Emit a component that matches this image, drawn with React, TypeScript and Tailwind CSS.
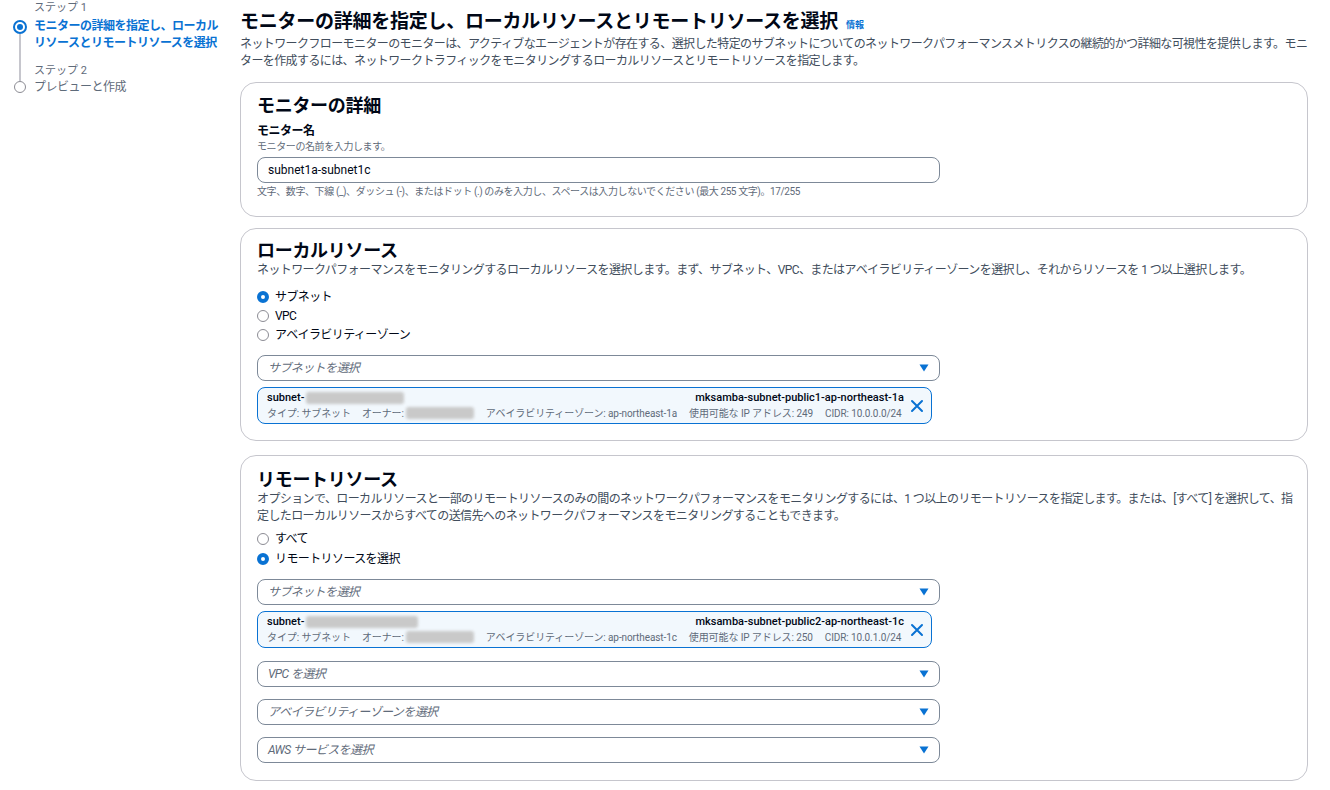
import React from "react";

const FONT = "font-['Roboto','Noto_Sans_CJK_JP',sans-serif]";

function Radio({ checked, label }: { checked?: boolean; label: string }) {
  return (
    <label className="flex h-[19px] items-center gap-[6px] text-[12px] tracking-[-0.6px] text-[#000716]">
      <span
        className={
          checked
            ? "h-[12px] w-[12px] rounded-full border-[4px] border-[#0972d3] bg-white"
            : "h-[12px] w-[12px] rounded-full border border-[#8c8c94] bg-white"
        }
      />
      {label}
    </label>
  );
}

function Select({ placeholder }: { placeholder: string }) {
  return (
    <div className="flex h-[26px] w-[683px] items-center justify-between rounded-[8px] border border-[#7d8998] bg-white pl-[10px] pr-[10px]">
      <span className="text-[12px] italic tracking-[-0.6px] text-[#5f6b7a]">{placeholder}</span>
      <svg width="10" height="8" viewBox="0 0 10 8">
        <path d="M0.5 0.5h9L5 7.5z" fill="#0972d3" />
      </svg>
    </div>
  );
}

function Blur({ w }: { w: number }) {
  return <span className="ml-[2px] inline-block h-[12px] rounded-[3px] bg-[#c9c9c9] blur-[1.5px]" style={{ width: w }} />;
}

function Token({
  name,
  az,
  ips,
  cidr,
  idBlur,
}: {
  name: string;
  az: string;
  ips: string;
  cidr: string;
  idBlur: number;
}) {
  return (
    <div className="flex h-[37px] w-[675px] items-center rounded-[8px] border border-[#0972d3] bg-[#f2f8fd] pl-[9px] pr-[7px]">
      <div className="flex flex-1 flex-col">
        <div className="flex h-[15px] items-center justify-between text-[11px] font-medium text-[#000716]">
          <span className="flex items-center">
            subnet-
            <Blur w={idBlur} />
          </span>
          <span>{name}</span>
        </div>
        <div className="flex h-[15px] items-center gap-[12px] text-[10px] tracking-[-0.1px] text-[#5f6b7a]">
          <span className="flex items-center">
            タイプ: サブネット
            <span className="ml-[11px]">オーナー:</span>
            <Blur w={68} />
          </span>
          <span>アベイラビリティーゾーン: {az}</span>
          <span>使用可能な IP アドレス: {ips}</span>
          <span>CIDR: {cidr}</span>
        </div>
      </div>
      <svg width="14" height="14" viewBox="0 0 14 14" className="ml-[6px]">
        <path d="M2 2l10 10M12 2L2 12" stroke="#0972d3" strokeWidth="2" strokeLinecap="round" />
      </svg>
    </div>
  );
}

function Card({ children, className = "" }: { children: React.ReactNode; className?: string }) {
  return (
    <section className={"w-[1068px] rounded-[16px] border border-[#c6c6cd] bg-white pl-[16px] pr-[12px] " + className}>
      {children}
    </section>
  );
}

function Steps() {
  return (
    <nav className="w-[228px] pl-[13px] pt-[1px]">
      <div className="flex">
        <div className="flex w-[14px] flex-col items-center">
          <div className="h-[19px]" />
          <span className="h-[14px] w-[14px] rounded-full border-[2px] border-[#0972d3] bg-white p-[2px]">
            <span className="block h-full w-full rounded-full bg-[#0972d3]" />
          </span>
          <div className="w-[2px] flex-1 bg-[#c6c6cd]" />
        </div>
        <div className="ml-[7px] pb-[12px]">
          <div className="h-[14px] text-[11px] leading-[14px] text-[#5f6b7a]">ステップ 1</div>
          <div className="mt-[3px] text-[12px] font-bold leading-[17px] tracking-[-0.5px] text-[#0972d3]">
            モニターの詳細を指定し、ローカル
            <br />
            リソースとリモートリソースを選択
          </div>
        </div>
      </div>
      <div className="flex">
        <div className="flex w-[14px] flex-col items-center">
          <div className="h-[17px] w-[2px] bg-[#c6c6cd]" />
          <span className="h-[12px] w-[12px] rounded-full border border-[#8c8c94] bg-white" />
        </div>
        <div className="ml-[7px]">
          <div className="h-[14px] text-[11px] leading-[14px] text-[#5f6b7a]">ステップ 2</div>
          <div className="mt-[1px] text-[12px] leading-[17px] tracking-[-0.5px] text-[#5f6b7a]">プレビューと作成</div>
        </div>
      </div>
    </nav>
  );
}

export default function App() {
  return (
    <div className={"flex min-h-[790px] w-[1330px] bg-white " + FONT}>
      <Steps />
      <main className="pt-[8px] pl-[12px]">
        <div className="flex items-baseline">
          <h1 className="text-[19px] font-bold leading-[28px] tracking-[-0.25px] text-[#000716]">
            モニターの詳細を指定し、ローカルリソースとリモートリソースを選択
          </h1>
          <a className="ml-[8px] text-[9px] font-bold text-[#0972d3]">情報</a>
        </div>
        <p className="w-[1068px] text-[12px] leading-[17px] tracking-[-0.6px] text-[#414d5c]">
          ネットワークフローモニターのモニターは、アクティブなエージェントが存在する、選択した特定のサブネットについてのネットワークパフォーマンスメトリクスの継続的かつ詳細な可視性を提供します。モニターを作成するには、ネットワークトラフィックをモニタリングするローカルリソースとリモートリソースを指定します。
        </p>

        <div className="mt-[12px] flex flex-col">
          <Card className="pt-[11px] pb-[16px]">
            <h2 className="text-[18px] font-bold leading-[24px] tracking-[-0.3px] text-[#000716]">モニターの詳細</h2>
            <div className="mt-[5px] text-[12px] font-bold leading-[16px] tracking-[-0.5px] text-[#000716]">モニター名</div>
            <div className="mt-[1px] text-[10px] leading-[14px] tracking-[-0.4px] text-[#5f6b7a]">モニターの名前を入力します。</div>
            <div className="mt-[3px] flex h-[26px] w-[683px] items-center rounded-[8px] border border-[#7d8998] px-[10px] text-[12px] text-[#000716]">
              subnet1a-subnet1c
            </div>
            <div className="mt-[1px] text-[10px] leading-[16px] tracking-[-0.4px] text-[#5f6b7a]">
              文字、数字、下線 (_)、ダッシュ (-)、またはドット (.) のみを入力し、スペースは入力しないでください (最大 255 文字)。17/255
            </div>
          </Card>

          <Card className="mt-[11px] pt-[11px] pb-[16px]">
            <h2 className="text-[18px] font-bold leading-[22px] tracking-[-0.3px] text-[#000716]">ローカルリソース</h2>
            <p className="text-[12px] leading-[17px] tracking-[-0.6px] text-[#414d5c]">
              ネットワークパフォーマンスをモニタリングするローカルリソースを選択します。まず、サブネット、VPC、またはアベイラビリティーゾーンを選択し、それからリソースを 1 つ以上選択します。
            </p>
            <div className="mt-[8px] flex flex-col">
              <Radio checked label="サブネット" />
              <Radio label="VPC" />
              <Radio label="アベイラビリティーゾーン" />
            </div>
            <div className="mt-[11px]">
              <Select placeholder="サブネットを選択" />
            </div>
            <div className="mt-[6px]">
              <Token
                name="mksamba-subnet-public1-ap-northeast-1a"
                az="ap-northeast-1a"
                ips="249"
                cidr="10.0.0.0/24"
                idBlur={98}
              />
            </div>
          </Card>

          <Card className="mt-[14px] pt-[13px] pb-[17px]">
            <h2 className="text-[18px] font-bold leading-[22px] tracking-[-0.3px] text-[#000716]">リモートリソース</h2>
            <p className="text-[12px] leading-[17px] tracking-[-0.6px] text-[#414d5c]">
              オプションで、ローカルリソースと一部のリモートリソースのみの間のネットワークパフォーマンスをモニタリングするには、1 つ以上のリモートリソースを指定します。または、[すべて] を選択して、指定したローカルリソースからすべての送信先へのネットワークパフォーマンスをモニタリングすることもできます。
            </p>
            <div className="mt-[4px] flex flex-col gap-[1px]">
              <Radio label="すべて" />
              <Radio checked label="リモートリソースを選択" />
            </div>
            <div className="mt-[11px] flex flex-col">
              <Select placeholder="サブネットを選択" />
              <div className="mt-[6px]">
                <Token
                  name="mksamba-subnet-public2-ap-northeast-1c"
                  az="ap-northeast-1c"
                  ips="250"
                  cidr="10.0.1.0/24"
                  idBlur={112}
                />
              </div>
              <div className="mt-[13px] flex flex-col gap-[12px]">
                <Select placeholder="VPC を選択" />
                <Select placeholder="アベイラビリティーゾーンを選択" />
                <Select placeholder="AWS サービスを選択" />
              </div>
            </div>
          </Card>
        </div>
      </main>
    </div>
  );
}
